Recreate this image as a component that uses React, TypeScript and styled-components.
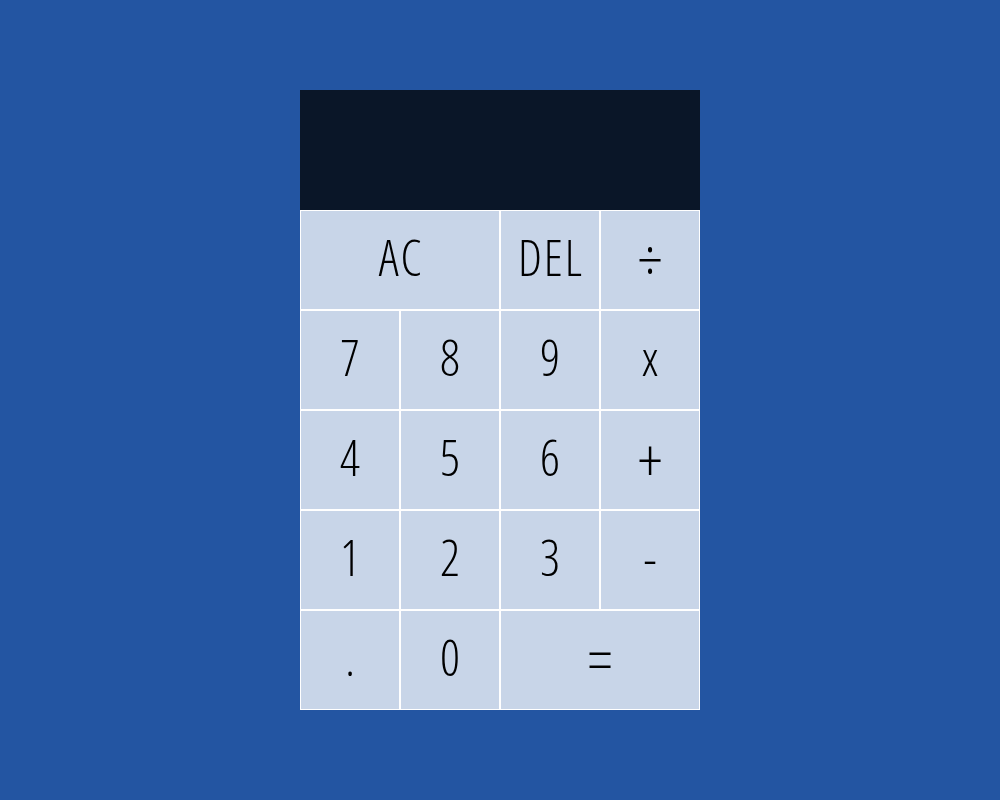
import React from "react";
import styled, { createGlobalStyle } from "styled-components";

const Global = createGlobalStyle`
  * { box-sizing: border-box; }
  html, body { margin: 0; padding: 0; }
  body {
    background: #2355a2;
    font-family: "Open Sans", "Roboto", sans-serif;
  }
`;

const Page = styled.div`
  min-height: 100vh;
  display: flex;
  justify-content: center;
  align-items: center;
`;

const Grid = styled.div`
  display: grid;
  grid-template-columns: repeat(4, 100px);
  grid-template-rows: 120px repeat(5, 100px);
`;

const Display = styled.div`
  grid-column: 1 / -1;
  background: #0a1628;
`;

const Key = styled.button<{ $span?: number; $sym?: boolean }>`
  grid-column: span ${(p) => p.$span ?? 1};
  background: #c8d5e8;
  border: 1px solid #ffffff;
  border-radius: 0;
  margin: 0;
  padding: ${(p) => (p.$sym ? "0 0 2px 0" : "0 0 5px 0.04em")};
  font-family: inherit;
  font-size: ${(p) => (p.$sym ? "60px" : "49px")};
  font-weight: 300;
  font-stretch: condensed;
  letter-spacing: ${(p) => (p.$sym ? "0" : "0.04em")};
  line-height: 1;
  color: #000;
  display: flex;
  align-items: center;
  justify-content: center;
  cursor: pointer;
`;

const keys: { label: string; span?: number; sym?: boolean }[] = [
  { label: "AC", span: 2 },
  { label: "DEL" },
  { label: "÷", sym: true },
  { label: "7" },
  { label: "8" },
  { label: "9" },
  { label: "x" },
  { label: "4" },
  { label: "5" },
  { label: "6" },
  { label: "+", sym: true },
  { label: "1" },
  { label: "2" },
  { label: "3" },
  { label: "-" },
  { label: "." },
  { label: "0" },
  { label: "=", span: 2, sym: true },
];

export default function App() {
  return (
    <>
      <Global />
      <Page>
        <Grid>
          <Display />
          {keys.map((k) => (
            <Key key={k.label} $span={k.span} $sym={k.sym}>
              {k.label}
            </Key>
          ))}
        </Grid>
      </Page>
    </>
  );
}
